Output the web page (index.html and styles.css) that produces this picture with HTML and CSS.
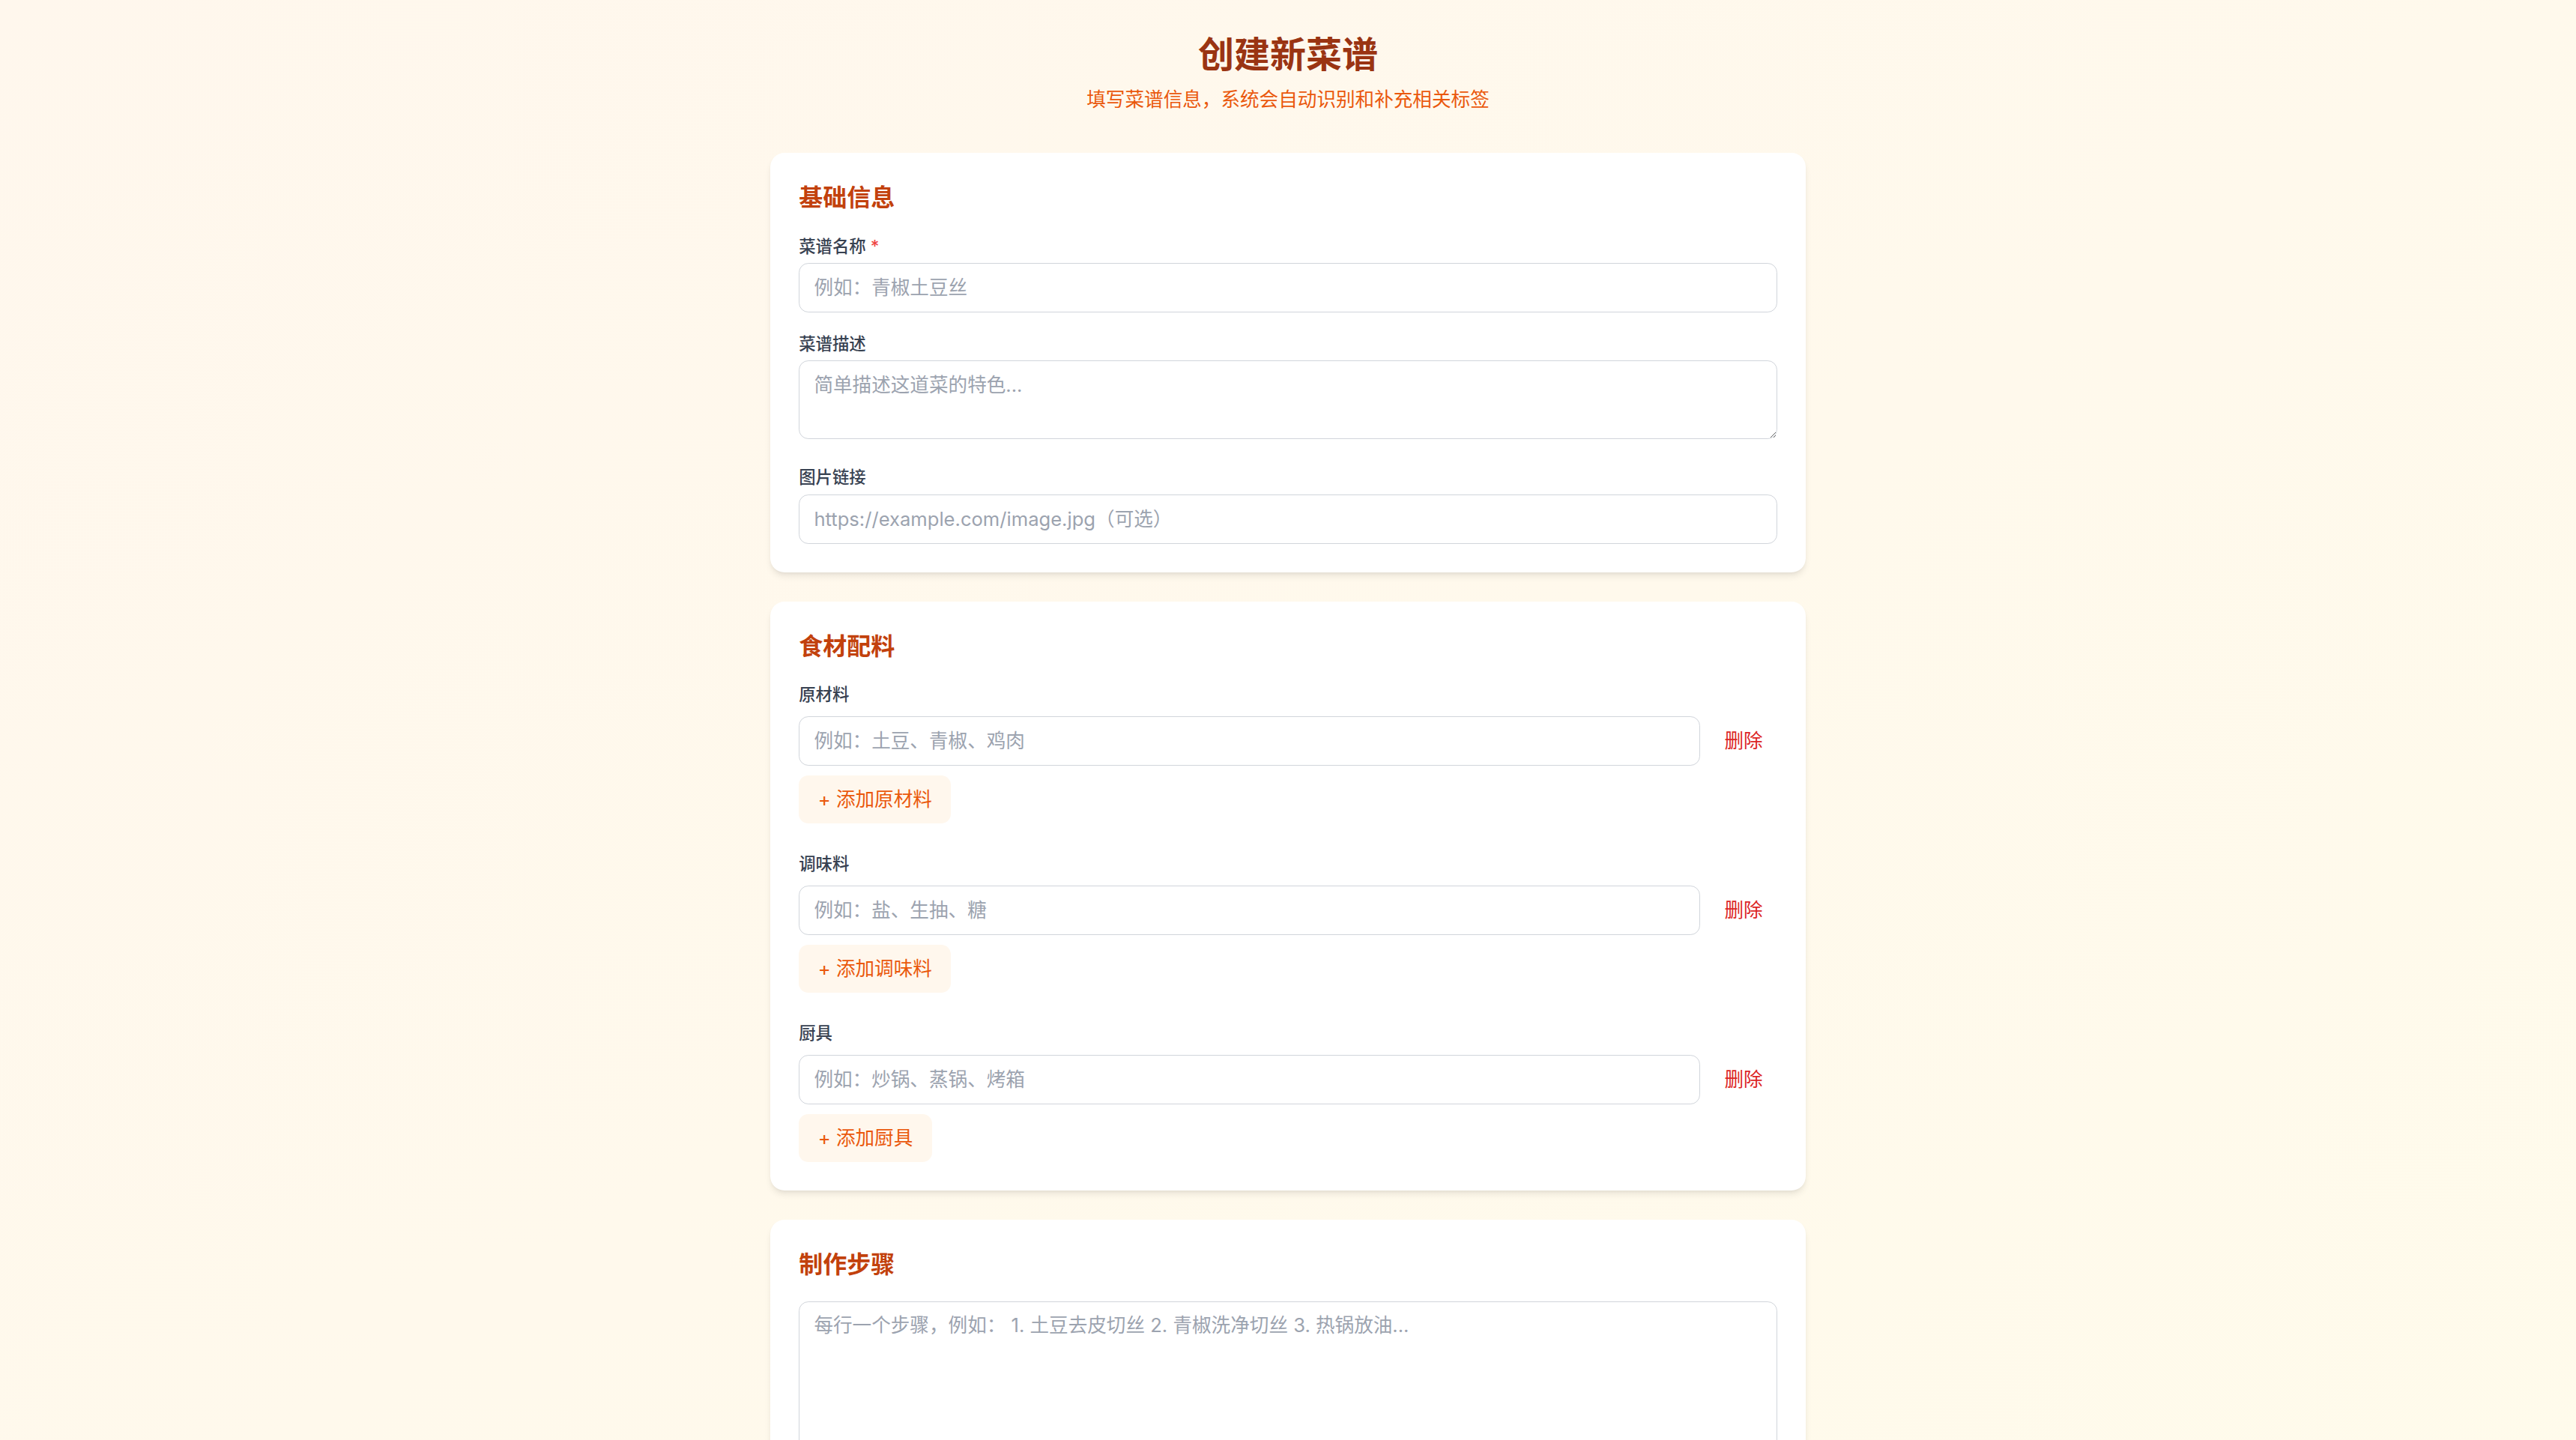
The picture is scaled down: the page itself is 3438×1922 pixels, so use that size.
FILE: index.html
```html
<!DOCTYPE html>
<html lang="zh-CN">
<head>
<meta charset="utf-8">
<title>创建新菜谱</title>
<link rel="stylesheet" href="styles.css">
</head>
<body>
<div class="page">
  <div class="container">
    <header class="hero">
      <h1 class="hero-title">创建新菜谱</h1>
      <p class="hero-sub">填写菜谱信息，系统会自动识别和补充相关标签</p>
    </header>

    <form class="form">
      <section class="card">
        <h2 class="card-title">基础信息</h2>
        <div class="fields">
          <div class="field">
            <label class="label label-tight">菜谱名称 <span class="req">*</span></label>
            <input class="input" type="text" placeholder="例如：青椒土豆丝">
          </div>
          <div class="field">
            <label class="label label-tight">菜谱描述</label>
            <textarea class="input textarea-desc" rows="2" placeholder="简单描述这道菜的特色..."></textarea>
          </div>
          <div class="field">
            <label class="label label-tight">图片链接</label>
            <input class="input" type="text" placeholder="https://example.com/image.jpg（可选）">
          </div>
        </div>
      </section>

      <section class="card">
        <h2 class="card-title">食材配料</h2>
        <div class="groups">
          <div class="group">
            <label class="label">原材料</label>
            <div class="row">
              <input class="input input-flex" type="text" placeholder="例如：土豆、青椒、鸡肉">
              <button type="button" class="btn-delete">删除</button>
            </div>
            <button type="button" class="btn-add">+ 添加原材料</button>
          </div>
          <div class="group">
            <label class="label">调味料</label>
            <div class="row">
              <input class="input input-flex" type="text" placeholder="例如：盐、生抽、糖">
              <button type="button" class="btn-delete">删除</button>
            </div>
            <button type="button" class="btn-add">+ 添加调味料</button>
          </div>
          <div class="group">
            <label class="label">厨具</label>
            <div class="row">
              <input class="input input-flex" type="text" placeholder="例如：炒锅、蒸锅、烤箱">
              <button type="button" class="btn-delete">删除</button>
            </div>
            <button type="button" class="btn-add">+ 添加厨具</button>
          </div>
        </div>
      </section>

      <section class="card">
        <h2 class="card-title">制作步骤</h2>
        <textarea class="input textarea-steps" rows="8" placeholder="每行一个步骤，例如： 1. 土豆去皮切丝 2. 青椒洗净切丝 3. 热锅放油..."></textarea>
      </section>
    </form>
  </div>
</div>
</body>
</html>
```

FILE: styles.css
```css
* {
  box-sizing: border-box;
}

html, body {
  margin: 0;
  padding: 0;
}

body {
  font-family: Inter, "Noto Sans CJK SC", "Noto Sans", sans-serif;
  font-size: 25.6px;
  line-height: 38.4px;
  color: #111827;
  background: linear-gradient(to bottom right, #fff7ed, #fffbeb);
  min-height: 100vh;
}

.page {
  min-height: 100vh;
}

.container {
  max-width: 1433.6px;
  margin: 0 auto;
  padding: 43.6px 25.6px 51.2px;
}

.hero {
  text-align: center;
  margin-bottom: 51.6px;
}

.hero-title {
  margin: 0 0 12.8px;
  font-size: 48px;
  line-height: 57.6px;
  font-weight: 700;
  color: #9a3412;
}

.hero-sub {
  margin: 0;
  font-size: 25.6px;
  line-height: 38.4px;
  color: #ea580c;
}

.form {
  display: flex;
  flex-direction: column;
  gap: 38.4px;
}

.card {
  background: #ffffff;
  border-radius: 19.2px;
  padding: 38.4px;
  box-shadow: 0 6.4px 9.6px -1.6px rgba(0, 0, 0, 0.08), 0 3.2px 6.4px -3.2px rgba(0, 0, 0, 0.08);
}

.card-title {
  margin: 0 0 25.6px;
  font-size: 32px;
  line-height: 44.8px;
  font-weight: 700;
  color: #c2410c;
}

.fields {
  display: flex;
  flex-direction: column;
  gap: 25.6px;
}

.field {
  display: flex;
  flex-direction: column;
}

.label {
  display: block;
  font-size: 22.4px;
  line-height: 32px;
  font-weight: 500;
  color: #374151;
  margin-bottom: 12.8px;
}

.label-tight {
  margin-bottom: 6.4px;
}

.groups {
  display: flex;
  flex-direction: column;
  gap: 38.4px;
}

.req {
  color: #ef4444;
}

.input {
  display: block;
  width: 100%;
  font-family: inherit;
  font-size: 25.6px;
  line-height: 38.4px;
  color: #111827;
  background: #ffffff;
  border: 1.6px solid #d1d5db;
  border-radius: 12.8px;
  padding: 12.8px 19.2px;
  outline: none;
  margin: 0;
}

.input::placeholder {
  color: #9ca3af;
  opacity: 1;
}

.textarea-desc {
  margin-bottom: 10.4px;
}

.textarea-steps {
  resize: vertical;
}

.group {
  display: flex;
  flex-direction: column;
  align-items: flex-start;
}

.row {
  display: flex;
  align-items: center;
  gap: 12.8px;
  width: 100%;
}

.input-flex {
  flex: 1;
  min-width: 0;
}

.btn-delete {
  font-family: inherit;
  font-size: 25.6px;
  line-height: 38.4px;
  color: #dc2626;
  background: transparent;
  border: none;
  padding: 12.8px 19.2px;
  margin: 0;
  cursor: pointer;
}

.btn-add {
  margin-top: 12.8px;
  font-family: inherit;
  font-size: 25.6px;
  line-height: 38.4px;
  color: #ea580c;
  background: #fff7ed;
  border: none;
  border-radius: 12.8px;
  padding: 12.8px 25.6px;
  cursor: pointer;
}
```
